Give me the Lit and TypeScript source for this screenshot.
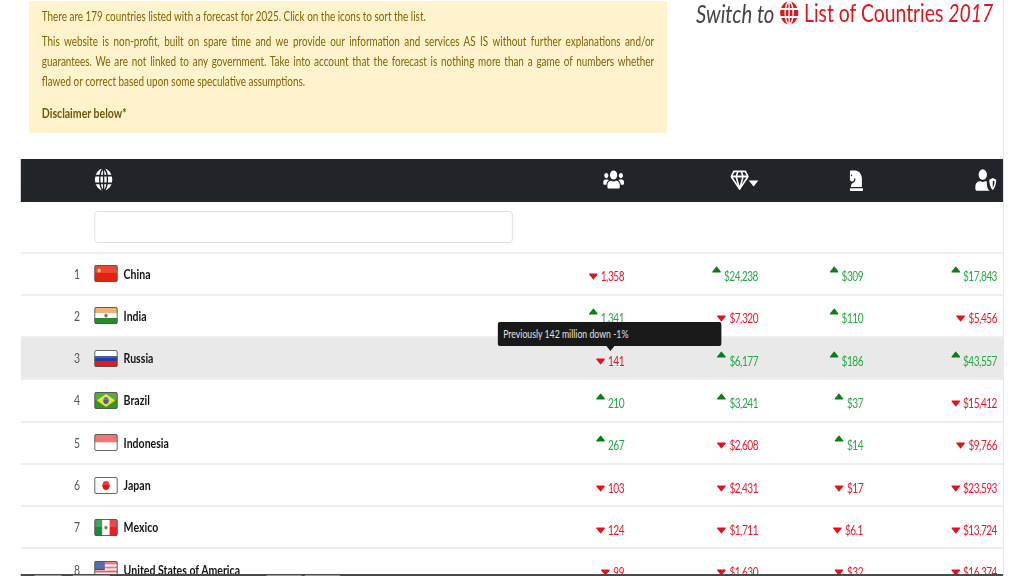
import { LitElement, html, css, svg } from "lit";
import { customElement } from "lit/decorators.js";

type V = [string, 0 | 1];
interface Row { name: string; flag: string; vals: V[]; }

const rows: Row[] = [
  { name: "China", flag: "cn", vals: [["1,358", 0], ["$24,238", 1], ["$309", 1], ["$17,843", 1]] },
  { name: "India", flag: "in", vals: [["1,341", 1], ["$7,320", 0], ["$110", 1], ["$5,456", 0]] },
  { name: "Russia", flag: "ru", vals: [["141", 0], ["$6,177", 1], ["$186", 1], ["$43,557", 1]] },
  { name: "Brazil", flag: "br", vals: [["210", 1], ["$3,241", 1], ["$37", 1], ["$15,412", 0]] },
  { name: "Indonesia", flag: "id", vals: [["267", 1], ["$2,608", 0], ["$14", 1], ["$9,766", 0]] },
  { name: "Japan", flag: "jp", vals: [["103", 0], ["$2,431", 0], ["$17", 0], ["$23,593", 0]] },
  { name: "Mexico", flag: "mx", vals: [["124", 0], ["$1,711", 0], ["$6.1", 0], ["$13,724", 0]] },
  { name: "United States of America", flag: "us", vals: [["99", 0], ["$1,630", 0], ["$32", 0], ["$16,374", 0]] },
];

const flagArt: Record<string, unknown> = {
  cn: svg`<rect width="29" height="17" fill="#e8200f"/><circle cx="6" cy="5.5" r="2" fill="#f5d020"/>`,
  in: svg`<rect width="29" height="6" fill="#f2a05a"/><rect y="6" width="29" height="5" fill="#fff"/><rect y="11" width="29" height="6" fill="#2a8a2a"/><circle cx="14.5" cy="8.5" r="2" fill="#5a6aa0"/>`,
  ru: svg`<rect width="29" height="6" fill="#fff"/><rect y="6" width="29" height="5" fill="#1c3fa8"/><rect y="11" width="29" height="6" fill="#e41a1a"/>`,
  br: svg`<rect width="29" height="17" fill="#2f9a1e"/><path d="M14.5 2 L26 8.5 14.5 15 3 8.5z" fill="#f2dc2a"/><circle cx="14.5" cy="8.5" r="3.4" fill="#3c5fa0"/>`,
  id: svg`<rect width="29" height="8.5" fill="#ee5a5a"/><rect y="8.5" width="29" height="8.5" fill="#fff"/>`,
  jp: svg`<rect width="29" height="17" fill="#fff"/><circle cx="14.5" cy="8.5" r="4.6" fill="#e8100f"/>`,
  mx: svg`<rect width="10" height="17" fill="#1f8a3c"/><rect x="10" width="9" height="17" fill="#fff"/><rect x="19" width="10" height="17" fill="#e8201f"/><circle cx="14.5" cy="8.5" r="2" fill="#8a7a3a"/>`,
  us: svg`<rect width="29" height="17" fill="#e86060"/><rect y="3.5" width="29" height="2" fill="#fff"/><rect y="7.5" width="29" height="2" fill="#fff"/><rect y="11.5" width="29" height="2" fill="#fff"/><rect y="15" width="29" height="2" fill="#fff"/><rect width="13" height="9" fill="#3c4a98"/>`,
};

const globe = (fill: string, line: string) => svg`
  <circle cx="12" cy="12" r="11.4" fill="${fill}"/>
  <g fill="none" stroke="${line}" stroke-width="1.8">
    <ellipse cx="12" cy="12" rx="5" ry="11.2"/>
    <path d="M12 .5V23.5M.8 8H23.2M.8 16H23.2"/>
  </g>`;

const USERS = "M96 224c35.3 0 64-28.7 64-64s-28.7-64-64-64-64 28.7-64 64 28.7 64 64 64zm448 0c35.3 0 64-28.7 64-64s-28.7-64-64-64-64 28.7-64 64 28.7 64 64 64zm32 32h-64c-17.6 0-33.5 7.1-45.1 18.6 40.3 22.1 68.9 62 75.1 109.4h66c17.7 0 32-14.3 32-32v-32c0-35.3-28.7-64-64-64zm-256 0c61.9 0 112-50.1 112-112S381.9 32 320 32 208 82.1 208 144s50.1 112 112 112zm76.8 32h-8.3c-20.8 10-43.9 16-68.5 16s-47.6-6-68.5-16h-8.3C179.6 288 128 339.6 128 403.2V432c0 26.5 21.5 48 48 48h288c26.5 0 48-21.5 48-48v-28.8c0-63.6-51.6-115.2-115.2-115.2zm-223.7-13.4C161.5 263.1 145.6 256 128 256H64c-35.3 0-64 28.7-64 64v32c0 17.7 14.3 32 32 32h65.9c6.3-47.4 34.9-87.3 75.2-109.4z";
const KNIGHT = "M19 272.47l40.63 18.06a32 32 0 0 0 24.88.47l12.78-5.12a32 32 0 0 0 18.76-20.5l9.22-30.65a24 24 0 0 1 12.55-15.65L159.94 208v50.33a48 48 0 0 1-26.53 42.94l-57.22 28.65A80 80 0 0 0 32 401.48V416h319.86V224c0-106-85.92-192-191.92-192H12A12 12 0 0 0 0 44a16.9 16.9 0 0 0 1.79 7.58L16 80l-9 9a24 24 0 0 0-7 17v137.21a32 32 0 0 0 19 29.26zM52 128a20 20 0 1 1-20 20 20 20 0 0 1 20-20zm316 320H16a16 16 0 0 0-16 16v32a16 16 0 0 0 16 16h352a16 16 0 0 0 16-16v-32a16 16 0 0 0-16-16z";

@customElement("app-root")
export class AppRoot extends LitElement {
  static styles = css`
    :host { display: block; height: 576px; overflow: hidden; position: relative; background: #fff; }
    .page {
      width: 1255px; height: 576px; box-sizing: border-box; position: relative; overflow: hidden;
      transform: scaleX(0.8); transform-origin: 0 0;
      border-right: 1px solid #fbd5d5;
      font-family: Lato, "Open Sans", sans-serif; font-size: 12.4px; filter: blur(0.3px);
    }
    .top { display: flex; padding: 1px 0 0 36.25px; height: 132px; gap: 36.25px; }
    .note {
      flex: none; width: 797.5px; box-sizing: border-box; height: 132px; padding: 6px 16px 0;
      background: #fff3cd; color: #856404; border-radius: 3px; line-height: 20px;
    }
    .note p { margin: 0 0 5px; text-align: justify; }
    .note p.dis { margin-top: 11px; font-weight: 700; font-size: 13.2px; color: #72560c; }
    .title { flex: none; font-size: 24.2px; line-height: 24px; white-space: nowrap; color: #e0141c; display: flex; align-items: center; height: 24px; gap: 6px; }
    .title i { font-style: italic; }
    .title .sw { color: #444; font-size: 25.4px; font-weight: 400; }
    .title svg { width: 25px; height: 24px; flex: none; }
    .table { margin: 26px 0 0 26.25px; width: 1227.5px; box-sizing: border-box; position: relative; }
    .grid { display: grid; grid-template-columns: 91.25px 1fr 100px 167.5px 131.25px 167.5px; padding-right: 7.5px; }
    .head { background: #212529; height: 43px; box-sizing: border-box; padding-bottom: 2px; align-items: center; color: #fff; }
    .head .gl { width: 23px; height: 23px; }
    .head .ic { display: flex; justify-content: flex-end; align-items: center; fill: #fff; }
    .head .ic.left { justify-content: flex-start; }
    .head .caret { margin-top: 8px; }
    .filter { height: 49.5px; box-sizing: border-box; padding-top: 1px; align-items: center; }
    .filter .wide { grid-column: span 5; }
    .filter input { display: block; width: 523.5px; height: 32px; box-sizing: border-box; border: 1px solid #dcdcdc; border-radius: 4px; background: #fff; padding: 0; }
    .row { height: 42.29px; box-sizing: border-box; border-top: 2px solid #eee; align-items: center; }
    .row.sel { background: #e9e9e9; }
    .rank { text-align: right; padding-right: 17.5px; color: #555; font-size: 13px; }
    .name { display: flex; align-items: center; gap: 8px; font-weight: 700; font-size: 13.2px; color: #151515; white-space: nowrap; }
    .flag { width: 29px; height: 17px; flex: none; display: block; border-radius: 2px; outline: 1.5px solid #555; outline-offset: -1.5px; }
    .val { display: flex; justify-content: flex-end; align-items: center; gap: 3.75px; padding-top: 6px; font-size: 12.6px; letter-spacing: -0.6px; }
    .val.up { color: #28a745; }
    .val.dn { color: #e8172c; }
    .arrow { width: 11.5px; height: 7px; flex: none; }
    .val.up .arrow { fill: #0a7f14; stroke: #0a7f14; margin-top: -14px; }
    .val.dn .arrow { fill: #e80f1c; stroke: #e80f1c; }
    .tip {
      position: absolute; left: 622px; top: 322px; width: 279.5px; height: 24px; box-sizing: border-box;
      background: #191919; color: #e2e2e2; border-radius: 3px; font-size: 10.9px; line-height: 24px; padding-left: 7px;
    }
    .tip::after {
      content: ""; position: absolute; left: 136px; top: 24px;
      border: 5px solid transparent; border-top-color: #191919; border-bottom: 0;
    }
    .strip {
      position: absolute; left: 26.25px; width: 1227.5px; bottom: 0; height: 2px; background: #4a4a4a;
      display: flex; align-items: flex-end;
    }
    .strip span { height: 1px; background: #9a9a9a; }
    .s1 { margin-left: 17px; width: 34px; }
    .s2 { margin-left: 14px; width: 46px; }
    .s3 { margin-left: 196px; width: 44px; }
    .s4 { margin-left: 4px; width: 44px; }
  `;

  private arrow(up: 0 | 1) {
    return html`<svg class="arrow" viewBox="0 0 12 7"><path stroke-width="1.4" stroke-linejoin="round" d="${up ? "M6 1 L11 6H1z" : "M1 1H11L6 6z"}"/></svg>`;
  }

  render() {
    return html`
      <div class="page">
        <div class="top">
          <div class="note">
            <p>There are 179 countries listed with a forecast for 2025. Click on the icons to sort the list.</p>
            <p>This website is non-profit, built on spare time and we provide our information and services AS IS without further explanations and/or guarantees. We are not linked to any government. Take into account that the forecast is nothing more than a game of numbers whether flawed or correct based upon some speculative assumptions.</p>
            <p class="dis">Disclaimer below*</p>
          </div>
          <div class="title">
            <i class="sw">Switch to</i>
            <svg viewBox="0 0 24 24">${globe("#e0141c", "#fff")}</svg>
            <span>List of Countries <i>2017</i></span>
          </div>
        </div>
        <div class="table">
          <div class="grid head">
            <span></span>
            <span class="ic left"><svg class="gl" viewBox="0 0 24 24">${globe("#fff", "#212529")}</svg></span>
            <span class="ic"><svg width="26" height="21" viewBox="0 0 640 512"><path d="${USERS}"/></svg></span>
            <span class="ic">
              <svg width="23" height="22" viewBox="0 0 576 512"><g fill="none" stroke="#fff" stroke-width="48" stroke-linejoin="round"><path d="M110 40H466L550 170 288 480 26 170z"/><path d="M26 170H550M180 170L288 480 396 170 340 40M180 170L236 40"/></g></svg>
              <svg class="caret" width="12" height="7" viewBox="0 0 12 6"><path d="M0 0H12L6 6z"/></svg>
            </span>
            <span class="ic"><svg width="17" height="22" viewBox="0 0 384 512"><path d="${KNIGHT}"/></svg></span>
            <span class="ic"><svg width="27" height="22" viewBox="0 0 640 512"><circle cx="224" cy="128" r="124"/><path d="M0 464v-42c0-74 60-134 134-134h32c18 10 38 16 58 16s40-6 58-16h40c8 0 16 1 24 3v70c0 50 22 110 76 147H48c-26 0-48-20-48-44z"/><path d="M520 210l104 42c0 100-42 200-104 240-62-40-104-140-104-240zm0 64v164c30-30 50-90 54-150z" fill-rule="evenodd"/></svg></span>
          </div>
          <div class="grid filter"><span></span><span class="wide"><input type="text" aria-label="Filter" /></span></div>
          ${rows.map((r, i) => html`
            <div class="grid row ${i === 2 ? "sel" : ""}">
              <span class="rank">${i + 1}</span>
              <span class="name"><svg class="flag" viewBox="0 0 29 17" preserveAspectRatio="none">${flagArt[r.flag]}<rect width="29" height="8" fill="#fff" opacity="0.18"/></svg>${r.name}</span>
              ${r.vals.map(([t, up]) => html`<span class="val ${up ? "up" : "dn"}">${this.arrow(up)}${t}</span>`)}
            </div>`)}
        </div>
        <div class="tip">Previously 142 million down -1%</div>
        <div class="strip"><span class="s1"></span><span class="s2"></span><span class="s3"></span><span class="s4"></span></div>
      </div>
    `;
  }
}
